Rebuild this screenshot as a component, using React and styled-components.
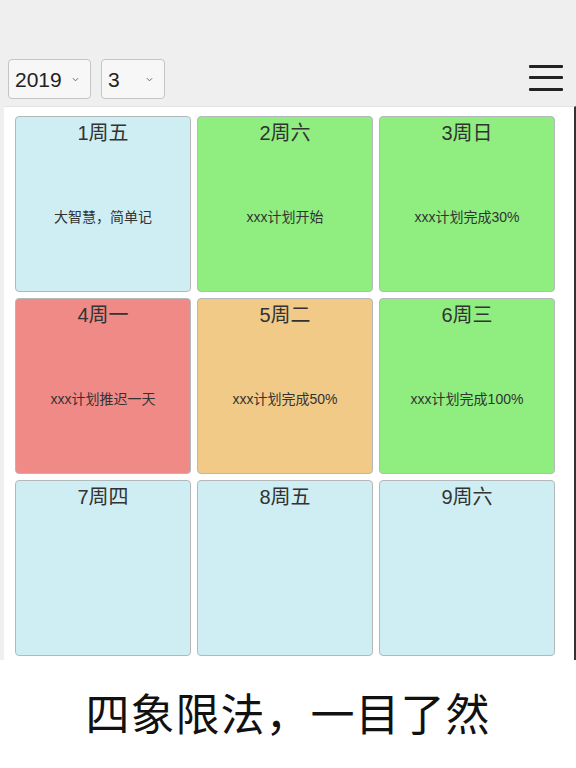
import React, { useState } from 'react'
import styled, { createGlobalStyle } from 'styled-components'

const GlobalStyle = createGlobalStyle`
  html, body {
    margin: 0;
    padding: 0;
    background: #ffffff;
    font-family: "Liberation Sans", "Noto Sans CJK SC", sans-serif;
  }
`

// colour for each kind of day
const COLORS = {
  idle: '#ceeef4',
  good: '#8fee7f',
  late: '#f08a87',
  half: '#f1ca88',
}

const days = [
  { day: 1, week: '周五', note: '大智慧，简单记', kind: 'idle' },
  { day: 2, week: '周六', note: 'xxx计划开始', kind: 'good' },
  { day: 3, week: '周日', note: 'xxx计划完成30%', kind: 'good' },
  { day: 4, week: '周一', note: 'xxx计划推迟一天', kind: 'late' },
  { day: 5, week: '周二', note: 'xxx计划完成50%', kind: 'half' },
  { day: 6, week: '周三', note: 'xxx计划完成100%', kind: 'good' },
  { day: 7, week: '周四', note: '', kind: 'idle' },
  { day: 8, week: '周五', note: '', kind: 'idle' },
  { day: 9, week: '周六', note: '', kind: 'idle' },
]

const App = () => {
  const [year, setYear] = useState('2019')
  const [month, setMonth] = useState('3')

  return (
    <>
      <GlobalStyle />
      <Screen>
        <Header>
          <Pickers>
            <SelectWrap $width={83}>
              <Select value={year} onChange={(e) => setYear(e.target.value)}>
                <option>2018</option>
                <option>2019</option>
                <option>2020</option>
              </Select>
              <Chevron viewBox="0 0 8 5">
                <path d="M1 1l3 3 3-3" fill="none" stroke="#555" strokeWidth="1" />
              </Chevron>
            </SelectWrap>
            <SelectWrap $width={64}>
              <Select value={month} onChange={(e) => setMonth(e.target.value)}>
                {[1, 2, 3, 4, 5, 6, 7, 8, 9, 10, 11, 12].map((m) => (
                  <option key={m}>{m}</option>
                ))}
              </Select>
              <Chevron viewBox="0 0 8 5">
                <path d="M1 1l3 3 3-3" fill="none" stroke="#555" strokeWidth="1" />
              </Chevron>
            </SelectWrap>
          </Pickers>
          <MenuButton aria-label="menu">
            <Bar />
            <Bar />
            <Bar />
          </MenuButton>
        </Header>
        <Panel>
          <Grid>
            {days.map((d) => (
              <DayCell key={d.day} $bg={COLORS[d.kind]}>
                <DayTitle>{d.day}{d.week}</DayTitle>
                <DayNote>{d.note}</DayNote>
              </DayCell>
            ))}
          </Grid>
        </Panel>
      </Screen>
      <Caption>四象限法，一目了然</Caption>
    </>
  )
}

const Screen = styled.div`
  display: flex;
  flex-direction: column;
  height: 660px;
  background: #efefef;
  overflow: hidden;
`

const Header = styled.div`
  display: flex;
  align-items: center;
  justify-content: space-between;
  height: 40px;
  padding: 59px 13px 7px 8px;
  flex-shrink: 0;
`

const Pickers = styled.div`
  display: flex;
  gap: 10px;
`

const SelectWrap = styled.div`
  position: relative;
  width: ${(p) => p.$width}px;
  height: 40px;
`

const Select = styled.select`
  appearance: none;
  -webkit-appearance: none;
  width: 100%;
  height: 100%;
  box-sizing: border-box;
  border: 1px solid #c4c4c4;
  border-radius: 4px;
  background: #f7f7f7;
  padding: 0 0 0 6px;
  font-family: "Liberation Sans", sans-serif;
  font-size: 21px;
  color: #222;
  outline: none;
`

const Chevron = styled.svg`
  position: absolute;
  right: 12px;
  top: 18px;
  width: 7px;
  height: 5px;
  pointer-events: none;
`

const MenuButton = styled.button`
  display: flex;
  flex-direction: column;
  justify-content: space-between;
  width: 34px;
  height: 26px;
  padding: 0;
  margin-top: -3px;
  border: none;
  background: transparent;
  cursor: pointer;
`

const Bar = styled.span`
  display: block;
  height: 3px;
  width: 100%;
  background: #222;
  border-radius: 1px;
`

const Panel = styled.div`
  flex: 1;
  margin-left: 4px;
  background: #ffffff;
  border-right: 2px solid #333;
  border-top: 1px solid #e2e2e2;
  padding: 9px 0 0 11px;
`

const Grid = styled.div`
  display: grid;
  grid-template-columns: repeat(3, 176px);
  grid-auto-rows: 176px;
  gap: 6px;
`

const DayCell = styled.div`
  display: flex;
  flex-direction: column;
  box-sizing: border-box;
  background: ${(p) => p.$bg};
  border: 1px solid #b3b9bb;
  border-radius: 4px;
  color: #333;
`

const DayTitle = styled.div`
  text-align: center;
  font-size: 20px;
  line-height: 28px;
  padding-top: 2px;
`

const DayNote = styled.div`
  flex: 1;
  display: flex;
  align-items: center;
  justify-content: center;
  font-size: 14px;
  padding-bottom: 6px;
`

const Caption = styled.div`
  height: 108px;
  display: flex;
  align-items: center;
  justify-content: center;
  padding-bottom: 4px;
  box-sizing: border-box;
  background: #ffffff;
  font-family: "Noto Sans CJK SC", sans-serif;
  font-size: 44px;
  color: #111;
  letter-spacing: 1px;
`

export default App
